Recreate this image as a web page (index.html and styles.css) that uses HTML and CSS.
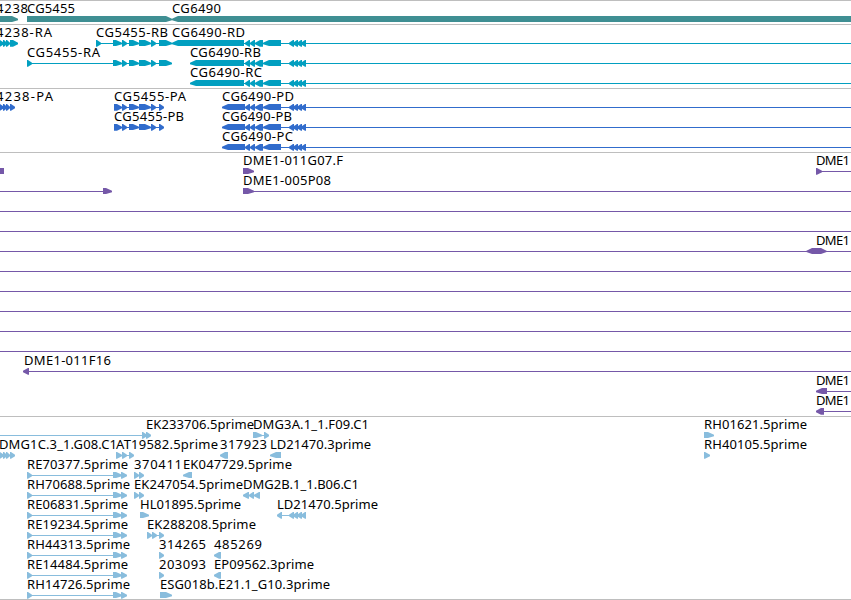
FILE: index.html
```
<!DOCTYPE html>
<html lang="en">
<head>
<meta charset="utf-8">
<title>Genome browser</title>
<link rel="stylesheet" href="styles.css">
</head>
<body>
<main class="browser" id="browser"></main>
<script src="tracks.js"></script>
</body>
</html>
```
FILE: styles.css
```
body {
  margin: 0;
  background: #fff;
}
.browser {
  display: flex;
  flex-direction: column;
  width: 851px;
  height: 600px;
  box-sizing: border-box;
  border-bottom: 1px solid #bebebe;
  overflow: hidden;
}
.track {
  box-sizing: border-box;
  flex: none;
  border-top: 1px solid #bebebe;
}
.track svg {
  display: block;
  width: 851px;
  overflow: visible;
}
.track text {
  font: 13px "Noto Sans", "Open Sans", sans-serif;
  fill: #000;
}
.gene { color: #3f8f93; height: 24px; }
.transcript { color: #029fc0; height: 64px; }
.protein { color: #316ccc; height: 64px; }
.clone { color: #7558a8; height: 264px; }
.est { color: #89bddd; height: 183px; }
.shape { fill: currentColor; }
.intron { fill: currentColor; shape-rendering: crispEdges; }
```
FILE: tracks.js
```
// Row entries: t = label [x, end, text], r / l = exons pointing right / left,
// b = plain block, h = two-headed block, n = connecting line.
const t = (x, e, s) => ['t', x, e, s];
const many = (kind, list) => list.map(p => [kind, p[0], p[1]]);
const r = (...p) => many('r', p);
const l = (...p) => many('l', p);
const b = (x, e) => ['b', x, e];
const h = (x, e) => ['h', x, e];
const n = (x, e) => ['n', x, e];

const exons = [[122, 127], [129, 139], [139, 151], [151, 156]];
const minus = [[245, 250], [250, 255], [255, 263], [263, 281], [289, 294], [293, 298], [297, 302], [301, 306]];
const est = (end, name) => [t(27, end, name), n(27, 122), ...r([27, 32], [113, 122], [121, 127])];

const tracks = [
  ['gene', 24, [
    [t(-4, 28, '4238'), t(27, 75, 'CG5455'), t(172, 221, 'CG6490'), ...r([-10, 18], [27, 172]), ...l([172, 851])]
  ]],
  ['transcript', 64, [
    [t(-4, 52, '4238-RA'), t(96, 168, 'CG5455-RB'), t(172, 245, 'CG6490-RD'), n(96, 160), n(244, 851),
      ...r([-1, 4], [3, 7], [6, 10], [10, 18], [96, 101], [113, 122], ...exons, [159, 172]), ...l([172, 244], ...minus)],
    [t(27, 100, 'CG5455-RA'), t(190, 261, 'CG6490-RB'), n(27, 160), n(244, 851),
      ...r([27, 32], [113, 122], ...exons, [159, 172]), ...l([190, 244], ...minus)],
    [t(190, 262, 'CG6490-RC'), n(244, 851), ...l([190, 244], ...minus)]
  ]],
  ['protein', 64, [
    [t(-4, 53, '4238-PA'), t(114, 186, 'CG5455-PA'), t(222, 294, 'CG6490-PD'), n(114, 160), n(244, 851),
      ...r([-1, 4], [3, 7], [6, 10], [10, 15], [114, 122], ...exons, [159, 164]), ...l([222, 245], ...minus)],
    [t(114, 184, 'CG5455-PB'), t(222, 292, 'CG6490-PB'), n(114, 160), n(244, 851),
      ...r([114, 122], ...exons, [159, 164]), ...l([222, 245], ...minus)],
    [t(222, 293, 'CG6490-PC'), n(244, 851), ...l([222, 245], ...minus)]
  ]],
  ['clone', 264, [
    [t(243, 343, 'DME1-011G07.F'), t(816, 850, 'DME1'), b(0, 4), ...r([243, 254], [816, 822]), n(816, 851)],
    [t(243, 331, 'DME1-005P08'), n(0, 104), n(243, 851), ...r([103, 112], [243, 254])],
    [n(0, 851)],
    [n(0, 851)],
    [t(816, 850, 'DME1'), n(0, 851), h(805, 828)],
    [n(0, 851)],
    [n(0, 851)],
    [n(0, 851)],
    [n(0, 851)],
    [n(0, 851)],
    [t(24, 111, 'DME1-011F16'), n(28, 851), ...l([23, 29])],
    [t(816, 850, 'DME1'), n(820, 851), ...l([816, 827])],
    [t(816, 850, 'DME1'), n(820, 851), ...l([816, 824])]
  ]],
  ['est', 183, [
    [t(146, 254, 'EK233706.5prime'), t(253, 369, 'DMG3A.1_1.F09.C1'), t(704, 807, 'RH01621.5prime'),
      n(0, 143), n(260, 265), ...r([142, 147], [146, 151], [253, 262], [264, 269], [704, 714])],
    [t(-1, 117, 'DMG1C.3_1.G08.C1'), t(116, 218, 'AT19582.5prime'), t(220, 267, '317923'), t(270, 371, 'LD21470.3prime'),
      t(704, 807, 'RH40105.5prime'), n(125, 130),
      ...r([-1, 4], [3, 7], [6, 10], [10, 15], [116, 122], [122, 127], [129, 134], [704, 710]), ...l([220, 228], [270, 281])],
    [...est(128, 'RE70377.5prime'), t(134, 182, '370411'), t(183, 292, 'EK047729.5prime'), ...r([134, 139], [139, 144]), ...l([183, 192])],
    [...est(130, 'RH70688.5prime'), t(134, 243, 'EK247054.5prime'), t(243, 359, 'DMG2B.1_1.B06.C1'),
      ...r([134, 139], [139, 144]), ...l([243, 249], [249, 254], [254, 260])],
    [...est(128, 'RE06831.5prime'), t(140, 241, 'HL01895.5prime'), t(277, 378, 'LD21470.5prime'), n(278, 290),
      ...r([140, 149]), ...l([277, 282], [289, 294], [293, 298], [297, 302], [301, 306])],
    [...est(128, 'RE19234.5prime'), t(147, 256, 'EK288208.5prime'), n(155, 160), ...r([147, 152], [152, 157], [159, 164])],
    [...est(130, 'RH44313.5prime'), t(159, 206, '314265'), t(214, 262, '485269'), ...r([159, 164]), ...l([214, 221])],
    [...est(128, 'RE14484.5prime'), t(159, 206, '203093'), t(214, 314, 'EP09562.3prime'), ...r([159, 164]), ...l([214, 221])],
    [...est(130, 'RH14726.5prime'), t(160, 330, 'ESG018b.E21.1_G10.3prime'), ...r([160, 172])]
  ]]
];

function draw([kind, x, e, s], y) {
  const top = y + 15, mid = y + 18.4, bottom = y + 21;
  const head = Math.min(6, e - x);
  const poly = pts => `<polygon class="shape" points="${pts}"/>`;
  // Narrow exons are full-height triangles with a slightly blunt tip.
  const small = e - x < 9;
  const base = small ? bottom + 0.8 : bottom;
  const up = mid - 0.7, down = mid + 0.8;
  const cut = small ? Math.max(1, e - x - 5) : e - x - head;
  switch (kind) {
    case 't': return `<text x="${x}" y="${y + 12}" textLength="${e - x}">${s}</text>`;
    case 'n': return `<rect class="intron" x="${x}" y="${y + 18}" width="${e - x}" height="1"/>`;
    case 'b': return `<rect class="intron" x="${x}" y="${top}" width="${e - x}" height="6"/>`;
    case 'r': return poly(`${x},${top} ${x + cut},${top} ${e},${up} ${e},${down} ${x + cut},${base} ${x},${base}`);
    case 'l': return poly(`${e},${top} ${e - cut},${top} ${x},${up} ${x},${down} ${e - cut},${base} ${e},${base}`);
    case 'h': return poly(`${x},${mid} ${x + 7},${top} ${e - 7},${top} ${e},${mid} ${e - 7},${bottom} ${x + 7},${bottom}`);
  }
}

document.getElementById('browser').innerHTML = tracks.map(([name, height, rows]) =>
  `<section class="track ${name}"><svg height="${height - 1}">${rows.map((row, i) =>
    row.map(item => draw(item, i * 20)).join('')).join('')}</svg></section>`).join('');
```
